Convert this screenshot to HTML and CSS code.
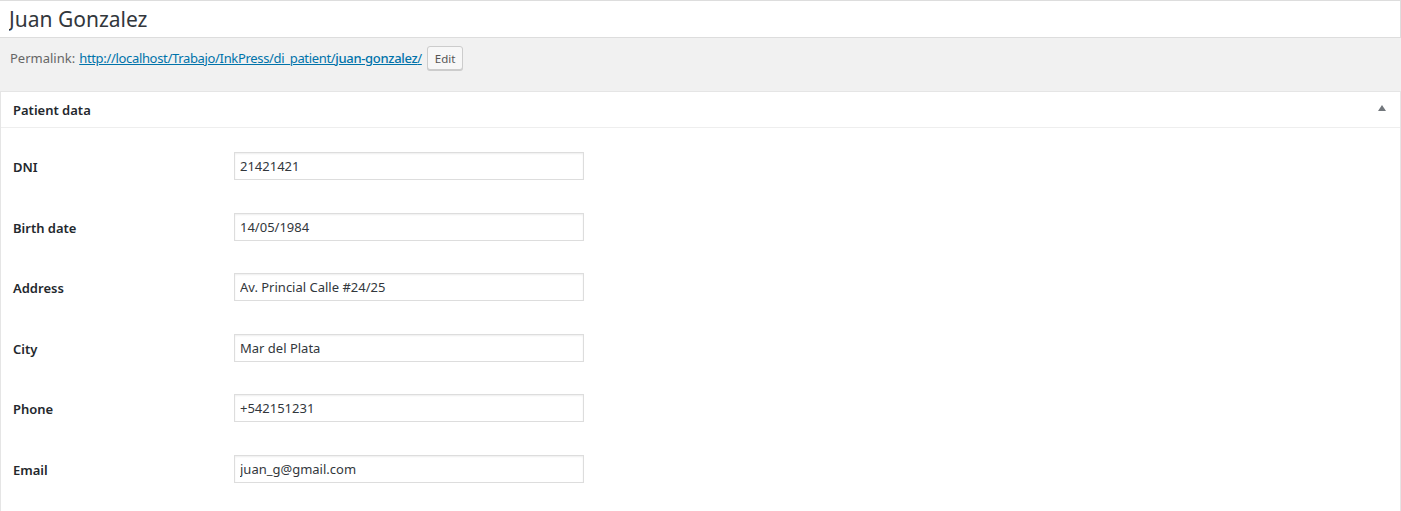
FILE: index.html
```html
<!DOCTYPE html>
<html lang="en">
<head>
    <meta charset="UTF-8">
    <title>Edit Patient - Juan Gonzalez</title>
    <link rel="stylesheet" href="styles.css">
</head>
<body>

    <div class="editor">
        <!-- TITLE -->
        <div class="title-wrap">
            <input type="text" class="title-input" value="Juan Gonzalez">
        </div>

        <!-- PERMALINK -->
        <div class="permalink">
            <span class="permalink-label">Permalink:</span>
            <a href="#">http://localhost/Trabajo/InkPress/di_patient/<span class="slug">juan-gonzalez</span>/</a>
            <button class="edit-button">Edit</button>
        </div>

        <!-- PATIENT DATA BOX -->
        <div class="postbox">
            <div class="postbox-header">
                <h2>Patient data</h2>
                <span class="toggle"></span>
            </div>
            <div class="postbox-body">
                <div class="field-row">
                    <label>DNI</label>
                    <input type="text" value="21421421">
                </div>
                <div class="field-row">
                    <label>Birth date</label>
                    <input type="text" value="14/05/1984">
                </div>
                <div class="field-row">
                    <label>Address</label>
                    <input type="text" value="Av. Princial Calle #24/25">
                </div>
                <div class="field-row">
                    <label>City</label>
                    <input type="text" value="Mar del Plata">
                </div>
                <div class="field-row">
                    <label>Phone</label>
                    <input type="text" value="+542151231">
                </div>
                <div class="field-row">
                    <label>Email</label>
                    <input type="text" value="juan_g@gmail.com">
                </div>
            </div>
        </div>
    </div>

</body>
</html>
```

FILE: styles.css
```css
body {
    font-family: "Noto Sans", "Open Sans", sans-serif;
    font-size: 13px;
    color: #23282d;
    margin: 0;
    background-color: #f1f1f1;
    overflow: hidden;
}
.editor {
    width: 1401px;
}
.title-wrap {
    background-color: white;
    border: 1px solid #dddddd;
    border-left: none;
    height: 36px;
}
.title-input {
    width: 100%;
    height: 36px;
    box-sizing: border-box;
    border: none;
    outline: none;
    background: transparent;
    padding: 0 9px;
    font-family: "Noto Sans", "Open Sans", sans-serif;
    font-size: 21px;
    color: #32373c;
}
.permalink {
    display: flex;
    align-items: center;
    height: 24px;
    padding: 8px 10px 21px;
    color: #666666;
}
.permalink-label {
    margin-right: 4px;
}
.permalink a {
    color: #0073aa;
    letter-spacing: -0.33px;
}
.permalink .slug {
    font-weight: 500;
}
.edit-button {
    margin-left: 5px;
    height: 24px;
    padding: 0 7px;
    font-family: "Noto Sans", "Open Sans", sans-serif;
    font-size: 11.5px;
    color: #555555;
    background-color: #f7f7f7;
    border: 1px solid #cccccc;
    border-radius: 3px;
    box-shadow: 0 1px 0 #cccccc;
}
.postbox {
    background-color: white;
    border: 1px solid #e5e5e5;
    min-height: 420px;
}
.postbox-header {
    display: flex;
    justify-content: space-between;
    align-items: center;
    height: 35px;
    border-bottom: 1px solid #eeeeee;
    padding: 0 12px 0 12px;
}
.postbox-header h2 {
    margin: 0;
    font-size: 13px;
    font-weight: 600;
}
/* collapse arrow */
.toggle {
    width: 0;
    height: 0;
    margin: 0 2px 3px 0;
    border-left: 4px solid transparent;
    border-right: 4px solid transparent;
    border-bottom: 6px solid #72777c;
}
.postbox-body {
    padding: 24px 12px;
    display: flex;
    flex-direction: column;
    gap: 32.6px;
}
.field-row {
    display: flex;
    align-items: center;
}
.field-row label {
    width: 221px;
    padding-top: 2px;
    font-weight: 600;
    font-size: 13px;
}
.field-row input {
    width: 350px;
    height: 28px;
    box-sizing: border-box;
    padding: 0 5px;
    border: 1px solid #dddddd;
    box-shadow: inset 0 1px 2px rgba(0, 0, 0, 0.07);
    font-family: "Noto Sans", "Open Sans", sans-serif;
    font-size: 13px;
    color: #32373c;
}
```
